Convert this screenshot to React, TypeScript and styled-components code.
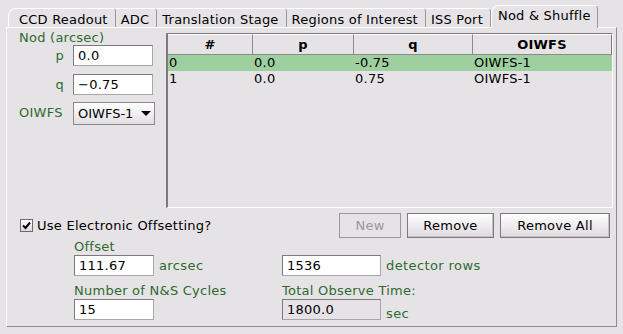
import styled, { createGlobalStyle } from "styled-components";

const GlobalStyle = createGlobalStyle`
  html, body {
    margin: 0;
    padding: 0;
    background: #e6e3e6;
  }
  body {
    font-family: "DejaVu Sans", "Liberation Sans", sans-serif;
    font-size: 13px;
    letter-spacing: 0.25px;
    color: #000;
  }
`;

const Frame = styled.div`
  width: 623px;
  height: 334px;
  background: #e6e3e6;
  overflow: hidden;
  box-sizing: border-box;
`;

const TabBar = styled.div`
  display: flex;
  align-items: flex-end;
  height: 27px;
  padding-left: 8px;
  box-sizing: border-box;
`;

const Tab = styled.div<{ $active?: boolean; $first?: boolean }>`
  box-sizing: border-box;
  height: ${(p) => (p.$active ? 23 : 19)}px;
  padding: ${(p) => (p.$active ? "3px 6px 0 6px" : "4px 7px 0 5px")};
  padding-left: ${(p) => (p.$first ? 10 : p.$active ? 6 : 5)}px;
  line-height: 13px;
  letter-spacing: 0.22px;
  border-top: 1px solid #fff;
  border-right: 1px solid #9a979a;
  border-left: ${(p) => (p.$first || p.$active ? "1px solid #fff" : "none")};
  border-top-left-radius: ${(p) => (p.$first || p.$active ? 8 : 0)}px;
  border-top-right-radius: 4px;
  white-space: nowrap;
  margin-bottom: ${(p) => (p.$active ? -1 : 0)}px;
  background: #e6e3e6;
  position: relative;
`;

const Panel = styled.div`
  margin: 0 6px;
  height: 300px;
  box-sizing: border-box;
  border-top: 1px solid #fff;
  border-left: 1px solid #fff;
  border-right: 1px solid #8c8a8c;
  border-bottom: 1px solid #8c8a8c;
  display: flex;
  flex-direction: column;
`;

const TopSection = styled.div`
  display: flex;
  gap: 12px;
  padding: 2px 3px 0 12px;
`;

const NodForm = styled.div`
  width: 135px;
  display: grid;
  grid-template-columns: 45px 81px;
  column-gap: 9px;
  align-items: center;
  align-content: start;
`;

const GreenLabel = styled.span`
  color: #2f6a2f;
  white-space: nowrap;
`;

const SectionTitle = styled(GreenLabel)`
  grid-column: 1 / span 2;
  height: 15px;
  line-height: 15px;
`;

const FieldLabel = styled(GreenLabel)<{ $align?: string }>`
  text-align: ${(p) => p.$align || "right"};
  align-self: ${(p) => (p.$align ? "start" : "center")};
  padding-top: ${(p) => (p.$align ? 3 : 0)}px;
`;

const TextBox = styled.div<{ $w?: number; $disabled?: boolean }>`
  box-sizing: border-box;
  width: ${(p) => p.$w || 80}px;
  height: 21px;
  line-height: 19px;
  padding: 0 4px;
  background: ${(p) => (p.$disabled ? "#e6e3e6" : "#fff")};
  border: 1px solid #7c7a7c;
  border-right-color: #a8a6a8;
  border-bottom-color: #a8a6a8;
  white-space: nowrap;
`;

const NodRow = styled.div<{ $gap: number }>`
  display: contents;
  & > * {
    margin-top: ${(p) => p.$gap}px;
  }
`;

const Combo = styled.div`
  box-sizing: border-box;
  width: 82px;
  height: 23px;
  display: flex;
  align-items: center;
  justify-content: space-between;
  padding: 0 3px 0 4px;
  letter-spacing: 0;
  border: 1px solid #8a888a;
  background: linear-gradient(#ffffff, #e2dee2);
  white-space: nowrap;
`;

const ArrowDown = styled.span`
  width: 0;
  height: 0;
  border-left: 5px solid transparent;
  border-right: 5px solid transparent;
  border-top: 5px solid #000;
`;

const TableWrap = styled.div`
  flex: 1;
  margin-top: 3px;
  height: 175px;
  box-sizing: border-box;
  border-top: 1px solid #7c7a7c;
  border-left: 2px solid #7c7a7c;
  border-right: 1px solid #fff;
  border-bottom: 1px solid #fff;
  display: flex;
  flex-direction: column;
`;

const Grid = styled.div`
  display: grid;
  grid-template-columns: 85px 101px 119px 1fr;
`;

const HeadCell = styled.div<{ $last?: boolean }>`
  height: 21px;
  box-sizing: border-box;
  border-top: 1px solid #fff;
  border-bottom: 1px solid #8c8a8c;
  border-right: 1px solid ${(p) => (p.$last ? "#7c7a7c" : "#8c8a8c")};
  font-weight: bold;
  text-align: center;
  line-height: 19px;
`;

const Cell = styled.div<{ $selected?: boolean }>`
  height: 16px;
  line-height: 16px;
  padding-left: 1px;
  background: ${(p) => (p.$selected ? "#9ecf9e" : "transparent")};
  white-space: nowrap;
`;

const ControlRow = styled.div`
  display: flex;
  align-items: center;
  justify-content: space-between;
  padding: 5px 6px 0 13px;
`;

const CheckLabel = styled.label`
  display: flex;
  align-items: center;
  gap: 4px;
  white-space: nowrap;
`;

const CheckBox = styled.span`
  box-sizing: border-box;
  width: 13px;
  height: 13px;
  border: 1px solid #6c6a6c;
  background: linear-gradient(#ffffff, #dcd8dc);
  display: flex;
  align-items: center;
  justify-content: center;
`;

const Buttons = styled.div`
  display: flex;
  gap: 6px;
`;

const Button = styled.button<{ $w: number }>`
  box-sizing: border-box;
  width: ${(p) => p.$w}px;
  height: 25px;
  font: inherit;
  letter-spacing: inherit;
  color: ${(p) => (p.disabled ? "#9a989a" : "#000")};
  background: ${(p) =>
    p.disabled ? "#e6e3e6" : "linear-gradient(#ffffff, #ded9de)"};
  border: 1px solid ${(p) => (p.disabled ? "#9a989a" : "#7c7a7c")};
  box-shadow: ${(p) => (p.disabled ? "none" : "inset -1px -1px 0 #c4c0c4")};
  padding: 0;
`;

const OffsetGrid = styled.div`
  display: grid;
  grid-template-columns: 208px 1fr;
  padding: 1px 0 0 67px;
`;

const FieldBlock = styled.div<{ $second?: boolean }>`
  display: flex;
  flex-direction: column;
  margin-top: ${(p) => (p.$second ? 7 : 0)}px;
`;

const FieldCaption = styled(GreenLabel)`
  height: 16px;
  line-height: 16px;
`;

const FieldLine = styled.div`
  display: flex;
  align-items: flex-end;
  gap: 5px;
`;

const Unit = styled(GreenLabel)<{ $low?: boolean }>`
  letter-spacing: 0.4px;
  padding-bottom: ${(p) => (p.$low ? 0 : 3)}px;
  line-height: ${(p) => (p.$low ? 13 : 15)}px;
`;

const rows = [
  { n: "0", p: "0.0", q: "-0.75", w: "OIWFS-1" },
  { n: "1", p: "0.0", q: "0.75", w: "OIWFS-1" },
];

const tabs = [
  "CCD Readout",
  "ADC",
  "Translation Stage",
  "Regions of Interest",
  "ISS Port",
];

export default function App() {
  return (
    <Frame>
      <GlobalStyle />
      <TabBar>
        {tabs.map((t, i) => (
          <Tab key={t} $first={i === 0}>
            {t}
          </Tab>
        ))}
        <Tab $active>Nod &amp; Shuffle</Tab>
      </TabBar>
      <Panel>
        <TopSection>
          <NodForm>
            <SectionTitle>Nod (arcsec)</SectionTitle>
            <NodRow $gap={0}>
              <FieldLabel>p</FieldLabel>
              <TextBox>0.0</TextBox>
            </NodRow>
            <NodRow $gap={8}>
              <FieldLabel>q</FieldLabel>
              <TextBox>&minus;0.75</TextBox>
            </NodRow>
            <NodRow $gap={7}>
              <FieldLabel $align="left">OIWFS</FieldLabel>
              <Combo>
                OIWFS-1
                <ArrowDown />
              </Combo>
            </NodRow>
          </NodForm>
          <TableWrap>
            <Grid>
              <HeadCell>#</HeadCell>
              <HeadCell>p</HeadCell>
              <HeadCell>q</HeadCell>
              <HeadCell $last>OIWFS</HeadCell>
              {rows.flatMap((r, i) => [
                <Cell key={r.n + "n"} $selected={i === 0}>{r.n}</Cell>,
                <Cell key={r.n + "p"} $selected={i === 0}>{r.p}</Cell>,
                <Cell key={r.n + "q"} $selected={i === 0}>{r.q}</Cell>,
                <Cell key={r.n + "w"} $selected={i === 0}>{r.w}</Cell>,
              ])}
            </Grid>
          </TableWrap>
        </TopSection>
        <ControlRow>
          <CheckLabel>
            <CheckBox>
              <svg width="9" height="9" viewBox="0 0 9 9">
                <path d="M1 4.5 L3.5 7 L8 1.5" stroke="#000" strokeWidth="2" fill="none" />
              </svg>
            </CheckBox>
            Use Electronic Offsetting?
          </CheckLabel>
          <Buttons>
            <Button $w={62} disabled>New</Button>
            <Button $w={87}>Remove</Button>
            <Button $w={110}>Remove All</Button>
          </Buttons>
        </ControlRow>
        <OffsetGrid>
          <FieldBlock>
            <FieldCaption>Offset</FieldCaption>
            <FieldLine>
              <TextBox>111.67</TextBox>
              <Unit>arcsec</Unit>
            </FieldLine>
          </FieldBlock>
          <FieldBlock>
            <FieldCaption>&nbsp;</FieldCaption>
            <FieldLine>
              <TextBox $w={99}>1536</TextBox>
              <Unit>detector rows</Unit>
            </FieldLine>
          </FieldBlock>
          <FieldBlock $second>
            <FieldCaption>Number of N&amp;S Cycles</FieldCaption>
            <FieldLine>
              <TextBox>15</TextBox>
            </FieldLine>
          </FieldBlock>
          <FieldBlock $second>
            <FieldCaption>Total Observe Time:</FieldCaption>
            <FieldLine>
              <TextBox $w={99} $disabled>1800.0</TextBox>
              <Unit $low>sec</Unit>
            </FieldLine>
          </FieldBlock>
        </OffsetGrid>
      </Panel>
    </Frame>
  );
}
